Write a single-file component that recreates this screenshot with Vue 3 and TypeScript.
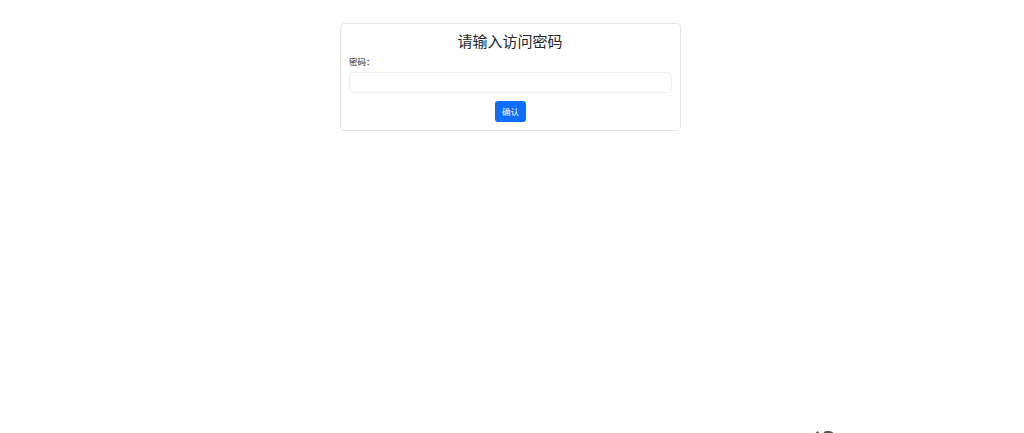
<script setup lang="ts">
import { ref } from 'vue'
const password = ref('')
</script>

<template>
  <main class="page">
    <form class="card" @submit.prevent>
      <h1 class="title">请输入访问密码</h1>
      <label class="label" for="pw">密码：</label>
      <input id="pw" v-model="password" class="input" type="password" />
      <div class="actions">
        <button class="btn" type="submit">确认</button>
      </div>
    </form>
    <div class="peek" aria-hidden="true">
      <svg width="22" height="4" viewBox="0 0 22 4">
        <path d="M1 4 L3.5 1 L6 4Z" fill="#444" />
        <path d="M9 4 C10 1 12 1 14 1 C17 1 19 2 20 4Z" fill="#555" />
      </svg>
    </div>
  </main>
</template>

<style>
body { margin: 0; background: #fff; }
</style>

<style scoped>
.page {
  position: relative;
  height: 433px;
  overflow: hidden;
  padding-top: 23px;
  box-sizing: border-box;
  font-family: "Liberation Sans", "Noto Sans CJK SC", sans-serif;
  color: #212529;
}
.card {
  width: 341px;
  height: 108px;
  box-sizing: border-box;
  margin-left: 340px;
  padding: 8px 8px 8px;
  border: 1px solid #e2e4e6;
  border-radius: 4px;
  background: #fff;
}
.title {
  margin: 0 0 4px;
  padding-right: 1px;
  font-size: 15px;
  font-weight: 400;
  line-height: 20px;
  text-align: center;
}
.label {
  display: block;
  font-size: 8.5px;
  line-height: 13px;
  margin-bottom: 3px;
}
.input {
  display: block;
  width: 100%;
  height: 21px;
  box-sizing: border-box;
  border: 1px solid #eceef0;
  border-radius: 4px;
  background: #fff;
  outline: none;
}
.actions {
  display: flex;
  justify-content: center;
  margin-top: 8px;
}
.btn {
  width: 31px;
  height: 21px;
  padding: 0 0 2px;
  border: none;
  border-radius: 3px;
  background: #0d6efd;
  color: #fff;
  font: inherit;
  font-size: 8.5px;
}
.peek {
  position: absolute;
  left: 814px;
  top: 429px;
  line-height: 0;
}
</style>
